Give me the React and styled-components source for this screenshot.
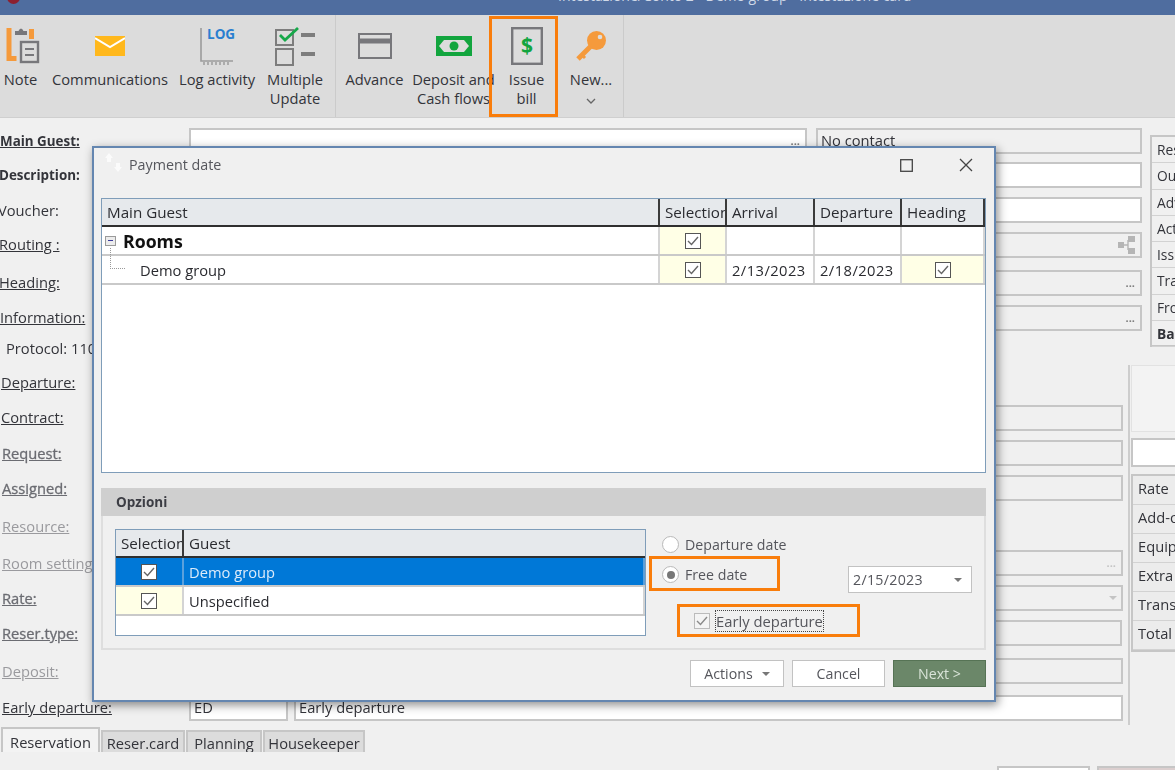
import styled, { createGlobalStyle } from "styled-components";

//#region Estilos
const GlobalStyle = createGlobalStyle`
  html, body {
    margin: 0;
    padding: 0;
    background: #f0f0f0;
    overflow: hidden;
  }
  body {
    font-family: "Open Sans", "Liberation Sans", sans-serif;
    font-size: 14.7px;
    color: #33343a;
  }
  * { box-sizing: border-box; }
`;

const Page = styled.div`
  position: relative;
  width: 1175px;
  height: 770px;
  overflow: hidden;
  filter: blur(0.35px);
`;

const TitleBar = styled.div`
  height: 15px;
  background: #4f6d9f;
  display: flex;
  align-items: flex-end;
  overflow: hidden;
  padding-left: 7px;
  color: #cfd9e8;
  font-size: 14px;
  line-height: 15px;
`;
const TitleLogo = styled.span`
  width: 13px;
  height: 13px;
  border-radius: 50%;
  background: #8c2030;
  margin-bottom: 11px;
`;
const TitleText = styled.span`
  margin-left: 538px;
  margin-bottom: 12px;
  white-space: nowrap;
`;

const Ribbon = styled.div`
  height: 103px;
  background: #dcdcdc;
  border-bottom: 1px solid #cfcfcf;
  display: flex;
`;
const RibbonItem = styled.div`
  position: relative;
  width: ${(p) => p.$w}px;
  padding-top: 7px;
  display: flex;
  flex-direction: column;
  align-items: center;
  text-align: center;
  line-height: 19px;
  white-space: nowrap;
  border-right: ${(p) => (p.$sep ? "1px solid #cbcbcb" : "none")};
`;
const RibbonIcon = styled.div`
  height: 48px;
  display: flex;
  align-items: center;
  justify-content: center;
`;
const Highlight = styled.div`
  position: absolute;
  left: -5px;
  top: 1px;
  width: 69px;
  height: 101px;
  border: 3px solid #f97d0b;
`;

const FormArea = styled.div`
  padding-top: 10px;
`;
const Upper = styled.div`
  display: flex;
  height: 208px;
`;
const Lower = styled.div`
  display: flex;
  height: 391px;
`;
const Rows = styled.div`
  width: ${(p) => p.$w}px;
  flex-shrink: 0;
`;
const Row = styled.div`
  height: ${(p) => p.$h}px;
  display: flex;
  gap: 6px;
`;
const Label = styled.div`
  width: 183px;
  flex-shrink: 0;
  line-height: ${(p) => p.$lh || 27}px;
  text-indent: ${(p) => p.$indent || 0}px;
  white-space: nowrap;
  overflow: hidden;
  text-decoration: ${(p) => (p.$plain ? "none" : "underline")};
  font-weight: ${(p) => (p.$bold ? 700 : 400)};
  font-size: ${(p) => (p.$bold ? "13.4px" : "inherit")};
  color: ${(p) => p.$color || "#33343a"};
  -webkit-text-stroke: ${(p) => (p.$semi ? "0.3px" : "0")};
`;
const Field = styled.div`
  flex: ${(p) => (p.$w ? `0 0 ${p.$w}px` : 1)};
  height: 26px;
  background: ${(p) => (p.$white ? "#fff" : "#f0f0f0")};
  border: 2px solid #c6c6c6;
  margin-right: ${(p) => p.$mr || 0}px;
  padding: 0 4px 1px 3px;
  line-height: 21px;
  display: flex;
  align-items: center;
  justify-content: space-between;
  overflow: hidden;
`;
const Dots = styled.span`
  font-size: 11px;
  font-weight: 700;
  line-height: 10px;
  margin-right: 1px;
  color: ${(p) => (p.$faint ? "#c4c4c4" : "#7d7d7d")};
`;
const Caret = styled.span`
  width: 0;
  height: 0;
  border-left: 4px solid transparent;
  border-right: 4px solid transparent;
  border-top: 4px solid ${(p) => p.$color || "#777"};
`;

const SideList = styled.div`
  flex: 1;
  margin: 7px 0 0 8px;
  height: 212px;
  border: 2px solid #c6c6c6;
  border-right: 0;
  align-self: flex-start;
  flex-shrink: 0;
  font-size: 13.8px;
`;
const SideRow = styled.div`
  height: ${(p) => p.$h}px;
  line-height: ${(p) => p.$lh}px;
  padding-left: 5px;
  border-bottom: 1px solid #d2d2d2;
  white-space: nowrap;
  overflow: hidden;
  font-weight: ${(p) => (p.$bold ? 700 : 400)};
`;
const Divider = styled.div`
  width: 2px;
  height: 360px;
  margin: 29px 0 0 5px;
  background: #cdcdcd;
  flex-shrink: 0;
`;
const SidePanel = styled.div`
  margin: 29px 0 0 1px;
  flex: 1;
  min-width: 0;
  display: flex;
  flex-direction: column;
`;
const BlankPanel = styled.div`
  height: 67px;
  background: #f3f3f3;
  border: 1px solid #e2e2e2;
  border-right: 0;
`;
const WhiteBox = styled.div`
  height: 29px;
  margin-top: 6px;
  background: #fff;
  border: 2px solid #c6c6c6;
  border-right: 0;
`;
const TotalsBox = styled.div`
  margin-top: 7px;
  background: #ececec;
  border: 2px solid #c6c6c6;
  border-right: 0;
`;

const Tabs = styled.div`
  height: 25px;
  display: flex;
  align-items: flex-end;
  padding-left: 1px;
`;
const Tab = styled.div`
  width: ${(p) => p.$w}px;
  height: ${(p) => (p.$active ? 25 : 22)}px;
  margin-right: 1px;
  text-align: center;
  line-height: ${(p) => (p.$active ? 27 : 23)}px;
  overflow: hidden;
  white-space: nowrap;
  background: ${(p) => (p.$active ? "#f3f3f3" : "#dcdcdc")};
  border: 2px solid #c6c6c6;
  border-bottom: 0;
`;
const BottomBar = styled.div`
  display: flex;
  margin: 14px 0 0 997px;
  gap: 7px;
`;
const BottomButton = styled.div`
  width: ${(p) => p.$w}px;
  height: 30px;
  flex-shrink: 0;
  background: ${(p) => p.$bg};
  border: 2px solid #c6c6c6;
`;

const Dialog = styled.div`
  position: absolute;
  left: 92px;
  top: 146px;
  width: 904px;
  height: 556px;
  background: #f0f0f0;
  border: 2px solid #6486b0;
  box-shadow: 2px 3px 9px rgba(0, 0, 0, 0.45);
  padding: 0 8px 0 7px;
`;
const DialogHead = styled.div`
  height: 50px;
  display: flex;
  align-items: flex-start;
  padding: 5px 0 0 3px;
  margin-right: -10px;
  line-height: 24px;
  font-size: 14.3px;
  color: #55565c;
`;
const DialogTitle = styled.span`
  margin: 0 auto 0 5px;
`;
const WindowButton = styled.button`
  width: 60px;
  height: 24px;
  padding: 0;
  border: 0;
  background: none;
  display: flex;
  align-items: center;
  justify-content: center;
`;
const GridBox = styled.div`
  height: ${(p) => p.$h}px;
  width: ${(p) => p.$w || "100%"};
  flex-shrink: 0;
  background: #fff;
  border: 1px solid #7f9db9;
`;
const GridRow = styled.div`
  display: grid;
  grid-template-columns: ${(p) => p.$cols};
  height: ${(p) => (p.$head ? 28 : 29)}px;
  background: ${(p) => (p.$selected ? "#0078d7" : "transparent")};
  color: ${(p) => (p.$selected ? "#dcebfa" : "#2a2b30")};
  border-bottom: ${(p) => (p.$head ? "2px solid #2f2f2f" : "2px solid #c9c9c9")};
`;
const HeadCell = styled.div`
  background: #e6e9ec;
  border-right: ${(p) => (p.$last ? "none" : "2px solid #3a3a3a")};
  padding-left: 5px;
  font-size: 15.2px;
  line-height: 26px;
  white-space: nowrap;
  overflow: hidden;
`;
const Cell = styled.div`
  position: relative;
  display: flex;
  align-items: center;
  justify-content: ${(p) => (p.$center ? "center" : "flex-start")};
  padding-left: ${(p) => (p.$center ? 0 : p.$pad ?? 5)}px;
  background: ${(p) => (p.$yellow ? "#ffffe6" : "transparent")};
  border-right: 2px solid ${(p) => (p.$selectedRow ? "#5ba0dc" : "#d4d4d4")};
  white-space: nowrap;
`;
const DateCell = styled(Cell)`
  letter-spacing: 0.45px;
`;
const Expander = styled.span`
  width: 11px;
  height: 10px;
  margin-right: 7px;
  background: #ececec;
  border: 1px solid #9a9a9a;
  display: flex;
  align-items: center;
  justify-content: center;
`;
const ExpanderBar = styled.span`
  width: 5px;
  height: 1px;
  background: #3c3c9c;
`;
const RoomsText = styled.span`
  font-size: 17.7px;
  font-weight: 700;
  color: #111;
`;
const TreeLine = styled.span`
  position: absolute;
  left: 8px;
  top: -8px;
  width: 15px;
  height: 21px;
  border-left: 1px dotted #999;
  border-bottom: 1px dotted #999;
`;
const Box = styled.span`
  width: 16px;
  height: 16px;
  background: ${(p) => (p.$muted ? "#f4f4f4" : "#fff")};
  border: ${(p) => (p.$muted ? "1px solid #bbb" : "1.5px solid #555")};
  display: inline-flex;
  align-items: center;
  justify-content: center;
  flex-shrink: 0;
`;

const Group = styled.div`
  height: 162px;
  margin-top: 15px;
  border: 2px solid #dedede;
  border-top: 0;
`;
const GroupHead = styled.div`
  height: 28px;
  margin: 0 -2px;
  background: #cfcfcf;
  padding-left: 15px;
  line-height: 28px;
  font-size: 13.5px;
  font-weight: 700;
  color: #3c3d44;
`;
const GroupBody = styled.div`
  display: flex;
  padding: 13px 0 0 12px;
`;
const Options = styled.div`
  margin-left: 3px;
  display: flex;
  flex-direction: column;
  color: #55565c;
  font-size: 14.2px;
`;
const RadioRow = styled.div`
  display: flex;
  align-items: center;
  gap: 6px;
  height: 30px;
  padding-left: 13px;
  white-space: nowrap;
`;
const FreeRow = styled.div`
  display: flex;
  align-items: flex-start;
  margin-top: -3px;
`;
const OrangeBox = styled.div`
  display: flex;
  align-items: center;
  width: ${(p) => p.$w}px;
  height: ${(p) => p.$h}px;
  margin: ${(p) => p.$m || 0};
  border: 3px solid #f97d0b;
  padding: ${(p) => p.$pad};
  gap: 6px;
  white-space: nowrap;
`;
const Radio = styled.span`
  width: 17px;
  height: 17px;
  border-radius: 50%;
  background: #fff;
  border: 1.5px solid #b9b9b9;
  display: inline-flex;
  align-items: center;
  justify-content: center;
  flex-shrink: 0;
`;
const RadioDot = styled.span`
  width: 8px;
  height: 8px;
  border-radius: 50%;
  background: #777;
`;
const DatePicker = styled.div`
  width: 124px;
  height: 27px;
  margin: 10px 0 0 68px;
  background: #fff;
  border: 1.5px solid #c2c2c2;
  padding: 0 9px 0 4px;
  display: flex;
  align-items: center;
  justify-content: space-between;
  letter-spacing: 0.3px;
`;
const FocusText = styled.span`
  outline: 1px dotted #444;
  font-size: 14.8px;
  line-height: 20px;
`;
const DialogFooter = styled.div`
  display: flex;
  justify-content: flex-end;
  gap: 8px;
  padding-top: 10px;
`;
const ActionButton = styled.button`
  width: ${(p) => p.$w}px;
  height: 27px;
  padding: 0;
  font-family: inherit;
  font-size: 14.2px;
  color: ${(p) => (p.$primary ? "#d9e4d8" : "#55565c")};
  background: ${(p) => (p.$primary ? "#6b8769" : "#fff")};
  border: 1.5px solid ${(p) => (p.$primary ? "#567355" : "#c2c2c2")};
  display: flex;
  align-items: center;
  justify-content: center;
  gap: 9px;
`;
//#endregion

const Check = ({ color = "#666" }) => (
  <svg width="12" height="10" viewBox="0 0 12 10">
    <path d="M1 5l3.5 3.5L11 1" fill="none" stroke={color} strokeWidth="1.4" />
  </svg>
);

const IconNote = () => (
  <svg width="38" height="38" viewBox="0 0 38 38">
    <path d="M4.5 1h5v28h5v5h-10z" fill="#f59a3c" />
    <path d="M27 2h5v10h-5z" fill="#f59a3c" />
    <path d="M13 8V4h3.5q1-2.5 2.5-2.5t2.5 2.5H25v4z" fill="#77777b" />
    <rect x="19" y="15" width="17" height="20" fill="#dcdcdc" stroke="#77777b" strokeWidth="2.4" />
    <path d="M23 22h9M23 28h9" stroke="#77777b" strokeWidth="2" />
  </svg>
);
const IconMail = () => (
  <svg width="30" height="22" viewBox="0 0 30 22">
    <rect x="0" y="1" width="30" height="20" fill="#ffb81c" />
    <path d="M0 3l15 9 15-9" fill="none" stroke="#fff" strokeWidth="2" />
  </svg>
);
const IconLog = () => (
  <svg width="36" height="38" viewBox="0 0 36 38">
    <path d="M2 1v33h32" fill="none" stroke="#9c9c9c" strokeWidth="1.6" />
    <path d="M5 35v3M9 35v3M13 35v3M17 35v3M21 35v3M25 35v3M29 35v3" stroke="#7c7c7c" strokeWidth="1" />
    <text x="8" y="11.5" fontFamily="Open Sans, sans-serif" fontWeight="700" fontSize="13.5" fill="#2a7fd0">
      LOG
    </text>
  </svg>
);
const IconMulti = () => (
  <svg width="42" height="42" viewBox="0 0 42 42">
    <rect x="2" y="5" width="17" height="15" fill="none" stroke="#7d7d7d" strokeWidth="2" />
    <rect x="2" y="24" width="17" height="16" fill="none" stroke="#7d7d7d" strokeWidth="2" />
    <path d="M6 10l5 5L24 3" fill="none" stroke="#17a84a" strokeWidth="2.8" />
    <path d="M27 10h14M27 29h14" stroke="#7d7d7d" strokeWidth="4" />
  </svg>
);
const IconCard = () => (
  <svg width="34" height="26" viewBox="0 0 34 26">
    <rect x="1" y="1" width="32" height="24" fill="none" stroke="#77777b" strokeWidth="2" />
    <path d="M1 8h32" stroke="#77777b" strokeWidth="5" />
  </svg>
);
const IconCash = () => (
  <svg width="36" height="22" viewBox="0 0 36 22">
    <path d="M0 1h36v20H0z" fill="#12a53e" />
    <path d="M3 11l5-6h20l5 6-5 6H8z" fill="#dcdcdc" />
    <circle cx="18" cy="11" r="4.5" fill="#12a53e" />
  </svg>
);
const IconBill = () => (
  <svg width="32" height="38" viewBox="0 0 32 38">
    <rect x="1.2" y="1.2" width="29.6" height="35.6" fill="none" stroke="#77777b" strokeWidth="2.4" />
    <text x="16" y="26" textAnchor="middle" fontFamily="Open Sans, sans-serif" fontWeight="700" fontSize="21" fill="#12a53e">
      $
    </text>
  </svg>
);
const IconKey = () => (
  <svg width="32" height="32" viewBox="0 0 32 32">
    <circle cx="21.5" cy="10.5" r="9.5" fill="#f59a3c" />
    <circle cx="25" cy="7" r="2.3" fill="#dcdcdc" />
    <path d="M16 16L3 29" stroke="#f59a3c" strokeWidth="5" />
    <path d="M7 25l3 3" stroke="#f59a3c" strokeWidth="3" />
  </svg>
);
const IconChevron = () => (
  <svg width="10" height="6" viewBox="0 0 10 6">
    <path d="M1 1l4 4 4-4" fill="none" stroke="#666" strokeWidth="1.3" />
  </svg>
);
const IconRouting = () => (
  <svg width="18" height="18" viewBox="0 0 18 18">
    <path d="M5 9h5M10 4v10" stroke="#b5b5b5" strokeWidth="1.4" />
    <rect x="0" y="6" width="6" height="6" fill="#b5b5b5" />
    <rect x="10" y="0" width="7" height="6" fill="#b5b5b5" />
    <rect x="10" y="12" width="7" height="6" fill="#b5b5b5" />
  </svg>
);
const IconDialog = () => (
  <svg width="20" height="20" viewBox="0 0 20 20">
    <path d="M5 0l4 5H7v4H3V5H1zM14 19l-4-5h2v-4h4v4h2z" fill="#fbfbfb" />
  </svg>
);

const ribbonItems = [
  { w: 41, icon: <IconNote />, text: "Note" },
  { w: 138, icon: <IconMail />, text: "Communications" },
  { w: 76, icon: <IconLog />, text: "Log activity" },
  { w: 81, icon: <IconMulti />, text: ["Multiple", "Update"], sep: true },
  { w: 77, icon: <IconCard />, text: "Advance" },
  { w: 81, icon: <IconCash />, text: ["Deposit and", "Cash flows"] },
  { w: 65, icon: <IconBill />, text: ["Issue", "bill"], highlight: true },
  { w: 65, icon: <IconKey />, text: ["New...", <IconChevron key="c" />], sep: true },
];

const grisLabel = "#6b6c72";
const claroLabel = "#9a9a9e";

const upperRows = [
  { h: 34, label: "Main Guest:", bold: true, main: true },
  { h: 35, label: "Description:", bold: true, plain: true, indent: -1, white: true },
  { h: 35, label: "Voucher:", plain: true, indent: -2, white: true },
  { h: 38, label: "Routing :", indent: -1, lh: 25, suffix: <IconRouting /> },
  { h: 35, label: "Heading:", indent: -1, lh: 25, suffix: <Dots>...</Dots> },
  { h: 31, label: "Information:", lh: 25, suffix: <Dots>...</Dots> },
];
const lowerRows = [
  { h: 34, label: "Protocol: 110", plain: true, indent: 6, lh: 25, none: true },
  { h: 35, label: "Departure:", indent: 1, lh: 25, none: true },
  { h: 35, label: "Contract:", indent: 1, lh: 25 },
  { h: 35, label: "Request:", indent: 2, color: grisLabel, semi: true },
  { h: 39, label: "Assigned:", indent: 2, color: grisLabel, semi: true },
  { h: 36, label: "Resource:", indent: 2, lh: 25, color: claroLabel, none: true },
  { h: 35, label: "Room setting", indent: 2, color: claroLabel, suffix: <Dots $faint>...</Dots> },
  { h: 35, label: "Rate:", indent: 2, color: grisLabel, semi: true, suffix: <Caret $color="#c4c4c4" /> },
  { h: 38, label: "Reser.type:", indent: 2, color: grisLabel, semi: true, mr: 1 },
  { h: 37, label: "Deposit:", indent: 2, color: claroLabel },
  { h: 32, label: "Early departure:", indent: 2, lh: 25, early: true },
];

const Etiqueta = ({ row }) => (
  <Label
    $bold={row.bold}
    $plain={row.plain}
    $indent={row.indent}
    $color={row.color}
    $semi={row.semi}
    $lh={row.lh}
  >
    {row.label}
  </Label>
);

const mainCols = "558px 67px 88px 87px 1fr";
const guestCols = "68px 1fr";

const App = () => {
  return (
    <Page>
      <GlobalStyle />
      <TitleBar>
        <TitleLogo />
        <TitleText>Intestazione/Conto 2 - Demo group - Intestazione card</TitleText>
      </TitleBar>

      {/* Ribbon */}
      <Ribbon>
        {ribbonItems.map((item, i) => (
          <RibbonItem key={i} $w={item.w} $sep={item.sep}>
            <RibbonIcon>{item.icon}</RibbonIcon>
            {[].concat(item.text).map((t, j) => (
              <span key={j}>{t}</span>
            ))}
            {item.highlight && <Highlight />}
          </RibbonItem>
        ))}
      </Ribbon>

      {/* Formulario */}
      <FormArea>
        <Upper>
          <Rows $w={1142}>
            {upperRows.map((row) => (
              <Row key={row.label} $h={row.h}>
                <Etiqueta row={row} />
                {row.main ? (
                  <>
                    <Field $white $w={618} $mr={3}>
                      <span />
                      <Dots>...</Dots>
                    </Field>
                    <Field>No contact</Field>
                  </>
                ) : (
                  <Field $white={row.white}>
                    <span />
                    {row.suffix}
                  </Field>
                )}
              </Row>
            ))}
          </Rows>
          <SideList>
            {["Reservation", "Outstanding", "Advance", "Actual", "Issued", "Transfer", "From"].map((t) => (
              <SideRow key={t} $h={26.3} $lh={25}>
                {t}
              </SideRow>
            ))}
            <SideRow $h={26} $lh={25} $bold>
              Balance
            </SideRow>
          </SideList>
        </Upper>
        <Lower>
          <Rows $w={1123}>
            {lowerRows.map((row) => (
              <Row key={row.label} $h={row.h}>
                <Etiqueta row={row} />
                {row.early ? (
                  <>
                    <Field $white $w={99}>
                      ED
                    </Field>
                    <Field $white>Early departure</Field>
                  </>
                ) : (
                  !row.none && (
                    <Field $mr={row.mr}>
                      <span />
                      {row.suffix}
                    </Field>
                  )
                )}
              </Row>
            ))}
          </Rows>
          <Divider />
          <SidePanel>
            <BlankPanel />
            <WhiteBox />
            <TotalsBox>
              {["Rate", "Add-on", "Equipment", "Extra", "Transfer", "Total"].map((t) => (
                <SideRow key={t} $h={29} $lh={25}>
                  {t}
                </SideRow>
              ))}
            </TotalsBox>
          </SidePanel>
        </Lower>
        <Tabs>
          <Tab $w={99} $active>
            Reservation
          </Tab>
          <Tab $w={84}>Reser.card</Tab>
          <Tab $w={76}>Planning</Tab>
          <Tab $w={102}>Housekeeper</Tab>
        </Tabs>
        <BottomBar>
          <BottomButton $w={93} $bg="#fff" />
          <BottomButton $w={100} $bg="#dccfcf" />
        </BottomBar>
      </FormArea>

      {/* Ventana */}
      <Dialog>
        <DialogHead>
          <IconDialog />
          <DialogTitle>Payment date</DialogTitle>
          <WindowButton>
            <svg width="13" height="13" viewBox="0 0 13 13">
              <rect x="0.7" y="0.7" width="11.6" height="11.6" fill="none" stroke="#444" strokeWidth="1.3" />
            </svg>
          </WindowButton>
          <WindowButton>
            <svg width="14" height="14" viewBox="0 0 14 14">
              <path d="M1 1l12 12M13 1L1 13" stroke="#444" strokeWidth="1.3" />
            </svg>
          </WindowButton>
        </DialogHead>

        <GridBox $h={275}>
          <GridRow $cols={mainCols} $head>
            <HeadCell>Main Guest</HeadCell>
            <HeadCell>Selection</HeadCell>
            <HeadCell>Arrival</HeadCell>
            <HeadCell>Departure</HeadCell>
            <HeadCell>Heading</HeadCell>
          </GridRow>
          <GridRow $cols={mainCols}>
            <Cell $pad={3}>
              <Expander>
                <ExpanderBar />
              </Expander>
              <RoomsText>Rooms</RoomsText>
            </Cell>
            <Cell $center $yellow>
              <Box>
                <Check />
              </Box>
            </Cell>
            <Cell />
            <Cell />
            <Cell />
          </GridRow>
          <GridRow $cols={mainCols}>
            <Cell $pad={38}>
              <TreeLine />
              Demo group
            </Cell>
            <Cell $center $yellow>
              <Box>
                <Check />
              </Box>
            </Cell>
            <DateCell>2/13/2023</DateCell>
            <DateCell>2/18/2023</DateCell>
            <Cell $center $yellow>
              <Box>
                <Check />
              </Box>
            </Cell>
          </GridRow>
        </GridBox>

        <Group>
          <GroupHead>Opzioni</GroupHead>
          <GroupBody>
            <GridBox $h={107} $w="531px">
              <GridRow $cols={guestCols} $head>
                <HeadCell>Selection</HeadCell>
                <HeadCell $last>Guest</HeadCell>
              </GridRow>
              <GridRow $cols={guestCols} $selected>
                <Cell $center $selectedRow>
                  <Box>
                    <Check />
                  </Box>
                </Cell>
                <Cell $selectedRow>Demo group</Cell>
              </GridRow>
              <GridRow $cols={guestCols}>
                <Cell $center $yellow>
                  <Box>
                    <Check />
                  </Box>
                </Cell>
                <Cell>Unspecified</Cell>
              </GridRow>
            </GridBox>
            <Options>
              <RadioRow>
                <Radio />
                Departure date
              </RadioRow>
              <FreeRow>
                <OrangeBox $w={131} $h={35} $pad="2px 0 0 10px">
                  <Radio>
                    <RadioDot />
                  </Radio>
                  Free date
                </OrangeBox>
                <DatePicker>
                  2/15/2023
                  <Caret />
                </DatePicker>
              </FreeRow>
              <OrangeBox $w={183} $h={33} $m="11px 0 0 28px" $pad="0 0 0 14px">
                <Box $muted>
                  <Check color="#8a8a8a" />
                </Box>
                <FocusText>Early departure</FocusText>
              </OrangeBox>
            </Options>
          </GroupBody>
        </Group>
        <DialogFooter>
          <ActionButton $w={94}>
            Actions
            <Caret />
          </ActionButton>
          <ActionButton $w={93}>Cancel</ActionButton>
          <ActionButton $w={93} $primary>
            Next &gt;
          </ActionButton>
        </DialogFooter>
      </Dialog>
    </Page>
  );
};

export default App;
